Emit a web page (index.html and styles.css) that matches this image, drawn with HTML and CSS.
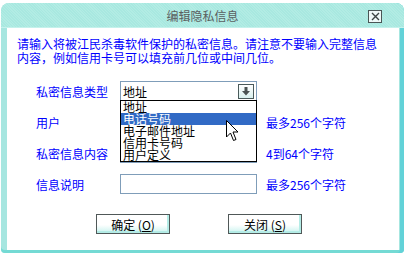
FILE: index.html
```html
<!DOCTYPE html>
<html lang="zh-CN">
<head>
    <meta charset="UTF-8">
    <title>编辑隐私信息</title>
    <link rel="stylesheet" href="styles.css">
</head>
<body>
    <div class="window">
        <div class="titlebar">
            <span></span>
            <div class="title">编辑隐私信息</div>
            <button class="close-button" title="关闭">
                <svg width="9" height="9" viewBox="0 0 9 9"><path d="M1 1 L8 8 M8 1 L1 8" stroke="#3a4444" stroke-width="1.4"/></svg>
            </button>
        </div>
        <div class="content">
            <p class="notice">请输入将被江民杀毒软件保护的私密信息。请注意不要输入完整信息<br>内容，例如信用卡号可以填充前几位或中间几位。</p>

            <div class="form">
                <label>私密信息类型</label>
                <div class="select-wrap">
                    <div class="select">
                        <span>地址</span>
                        <span class="select-arrow">
                            <svg width="10" height="9" viewBox="0 0 10 9"><path d="M3.5 0 H6.5 V4 H9 L5 8.5 L1 4 H3.5 Z" fill="#4a5252"/></svg>
                        </span>
                    </div>
                    <ul class="dropdown">
                        <li>地址</li>
                        <li class="active">电话号码</li>
                        <li>电子邮件地址</li>
                        <li>信用卡号码</li>
                        <li>用户定义</li>
                    </ul>
                    <svg class="cursor" width="13" height="22" viewBox="0 0 13 22"><path d="M0.5 0.5 V17 L4.5 13 L7.5 20.5 L10 19.5 L7 12 H12 Z" fill="#fff" stroke="#000" stroke-width="1"/></svg>
                </div>
                <span></span>

                <label>用户</label>
                <input type="text" class="field">
                <span class="hint">最多256个字符</span>

                <label>私密信息内容</label>
                <input type="text" class="field">
                <span class="hint">4到64个字符</span>

                <label>信息说明</label>
                <input type="text" class="field">
                <span class="hint">最多256个字符</span>
            </div>

            <div class="actions">
                <button class="button">确定 (<u>O</u>)</button>
                <button class="button">关闭 (<u>S</u>)</button>
            </div>
        </div>
    </div>
</body>
</html>
```

FILE: styles.css
```css
body {
    margin: 0;
    padding: 0;
    background: #fff;
    font-family: "Noto Sans CJK SC", "Liberation Sans", sans-serif;
    font-size: 12px;
}
.window {
    margin: 3px 4px 0 1px;
    width: 403px;
    height: 250px;
    display: flex;
    flex-direction: column;
    background: #a6e6e0;
    border-radius: 8px 8px 4px 4px;
    box-shadow: inset -4px 0 0 #62d2d8, inset 0 -3px 0 #74dad4;
}
.titlebar {
    height: 24px;
    display: grid;
    grid-template-columns: 1fr auto 1fr;
    align-items: center;
    background: repeating-linear-gradient(45deg, #a8e8e0 0 1px, #b2ece4 1px 2px);
    border-radius: 8px 8px 0 0;
    border-bottom: 1px solid #c4f2ec;
}
.title {
    color: #5a6060;
    font-size: 12px;
    line-height: 24px;
    padding-top: 1px;
}
.close-button {
    justify-self: end;
    margin-right: 22px;
    margin-top: 2px;
    width: 14px;
    height: 13px;
    padding: 0;
    display: flex;
    align-items: center;
    justify-content: center;
    background: #eef9f8;
    border: 1px solid #4a5656;
}
.content {
    flex: 1;
    margin: 0 5px 3px 6px;
    background: #fff;
    position: relative;
}
.notice {
    margin: 9px 0 0 10px;
    color: #0000ff;
    line-height: 14px;
    font-size: 12px;
}
.form {
    display: grid;
    grid-template-columns: 84px 137px auto;
    row-gap: 11px;
    align-items: center;
    margin: 16px 0 0 29px;
}
.form label {
    color: #0000ff;
}
.hint {
    color: #0000ff;
    margin-left: 9px;
}
.field {
    box-sizing: border-box;
    width: 137px;
    height: 20px;
    margin: 0;
    border: 1px solid #7f9db9;
    background: #fff;
}
.select-wrap {
    position: relative;
    height: 20px;
}
.select {
    box-sizing: border-box;
    height: 20px;
    display: flex;
    align-items: center;
    justify-content: space-between;
    padding: 0 2px 0 2px;
    border: 1px solid #7f9db9;
    color: #000;
}
.select-arrow {
    width: 14px;
    height: 13px;
    display: flex;
    align-items: center;
    justify-content: center;
    border: 1px solid #4a5a5a;
    background: linear-gradient(#ffffff, #d8f0ee);
}
.dropdown {
    position: absolute;
    top: 19px;
    left: 0;
    width: 135px;
    margin: 0;
    padding: 0;
    list-style: none;
    background: #fff;
    border: 1px solid #000;
    z-index: 2;
}
.dropdown li {
    height: 12px;
    line-height: 12px;
    padding-left: 2px;
    color: #000;
}
.dropdown li.active {
    background: #316ac5;
    color: #fff;
}
.cursor {
    position: absolute;
    left: 106px;
    top: 39px;
    z-index: 3;
}
.actions {
    display: flex;
    gap: 58px;
    margin: 20px 0 0 89px;
}
.button {
    width: 74px;
    height: 20px;
    padding: 0;
    font-family: "Noto Sans CJK SC", "Liberation Sans", sans-serif;
    font-size: 12px;
    color: #000;
    background: linear-gradient(#ffffff 55%, #c8f2ee);
    border: 1px solid #505858;
    box-shadow: inset -2px -2px 0 #b4ece6;
}
```
